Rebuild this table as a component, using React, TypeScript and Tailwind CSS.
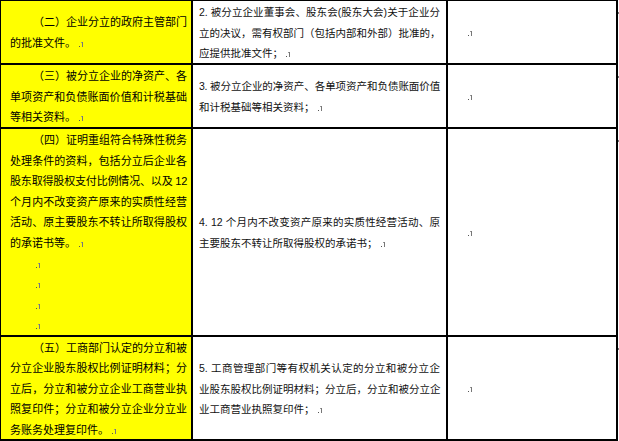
import type { ReactNode } from 'react';

type Line = { text: string; full?: boolean; indent?: boolean; mark?: boolean; tight?: boolean };

type Row = {
  height: string;
  left: Line[];
  right: Line[];
};

const rows: Row[] = [
  {
    height: 'h-[64px]',
    left: [
      { text: '（二）企业分立的政府主管部门', full: true, indent: true },
      { text: '的批准文件。', mark: true },
    ],
    right: [
      { text: '2. 被分立企业董事会、股东会(股东大会)关于企业分', full: true },
      { text: '立的决议，需有权部门（包括内部和外部）批准的，', full: true },
      { text: '应提供批准文件；', mark: true },
    ],
  },
  {
    height: 'h-[64px]',
    left: [
      { text: '（三）被分立企业的净资产、各', full: true, indent: true },
      { text: '单项资产和负债账面价值和计税基础', full: true },
      { text: '等相关资料。', mark: true },
    ],
    right: [
      { text: '3. 被分立企业的净资产、各单项资产和负债账面价值', full: true, tight: true },
      { text: '和计税基础等相关资料；', mark: true },
    ],
  },
  {
    height: 'h-[208px]',
    left: [
      { text: '（四）证明重组符合特殊性税务', full: true, indent: true },
      { text: '处理条件的资料，包括分立后企业各', full: true },
      { text: '股东取得股权支付比例情况、以及 12', full: true, tight: true },
      { text: '个月内不改变资产原来的实质性经营', full: true },
      { text: '活动、原主要股东不转让所取得股权', full: true },
      { text: '的承诺书等。', mark: true },
      { text: '', indent: true, mark: true },
      { text: '', indent: true, mark: true },
      { text: '', indent: true, mark: true },
      { text: '', indent: true, mark: true },
    ],
    right: [
      { text: '4. 12 个月内不改变资产原来的实质性经营活动、原', full: true },
      { text: '主要股东不转让所取得股权的承诺书；', mark: true },
    ],
  },
  {
    height: 'h-[104px]',
    left: [
      { text: '（五）工商部门认定的分立和被', full: true, indent: true },
      { text: '分立企业股东股权比例证明材料；分', full: true },
      { text: '立后，分立和被分立企业工商营业执', full: true },
      { text: '照复印件；分立和被分立企业分立业', full: true },
      { text: '务账务处理复印件。', mark: true },
    ],
    right: [
      { text: '5. 工商管理部门等有权机关认定的分立和被分立企', full: true },
      { text: '业股东股权比例证明材料；分立后，分立和被分立企', full: true },
      { text: '业工商营业执照复印件；', mark: true },
    ],
  },
];

function ParaMark() {
  return (
    <svg width="5" height="6" viewBox="0 0 5 6" className="ml-[3px] inline-block align-baseline">
      <rect x="0" y="5" width="1" height="1" fill="#555" />
      <rect x="3" y="1" width="1" height="5" fill="#777" />
      <rect x="2" y="1" width="1" height="1" fill="#999" />
    </svg>
  );
}

function TextLine({ line }: { line: Line }) {
  const content: ReactNode = (
    <>
      {line.text}
      {line.mark && <ParaMark />}
    </>
  );
  return (
    <div
      className={[
        'whitespace-nowrap',
        line.full ? 'text-justify [text-align-last:justify]' : '',
        line.indent ? 'indent-[23px]' : '',
        line.tight ? 'tracking-[-0.3px]' : '',
      ].join(' ')}
    >
      {content}
    </div>
  );
}

export default function App() {
  return (
    <div
      className="flex w-[619px] h-[441px] overflow-hidden bg-white text-black"
      style={{ fontFamily: '"Liberation Sans", "Noto Sans CJK SC", sans-serif' }}
    >
      <div className="flex flex-col w-[618px] border-l border-t border-black">
        {rows.map((row, i) => (
          <div key={i} className={`flex ${row.height} border-b-2 border-black`}>
            <div className="flex flex-col justify-center w-[192px] shrink-0 border-r-2 border-black bg-[#ffff00] pl-[9px] pr-[4px] pt-[2px] text-[11px] leading-[20.6px]">
              {row.left.map((l, j) => (
                <TextLine key={j} line={l} />
              ))}
            </div>
            <div className="flex flex-col justify-center w-[255px] shrink-0 border-r-2 border-black pl-[6px] pr-[6px] pt-[2px] text-[10.5px] leading-[20.6px] text-[#111]">
              {row.right.map((l, j) => (
                <TextLine key={j} line={l} />
              ))}
            </div>
            <div className="flex flex-1 items-center border-r-2 border-black pl-[17px] pt-[2px]">
              <ParaMark />
            </div>
          </div>
        ))}
      </div>
      <div className="flex flex-col w-px">
        {rows.map((row, i) => (
          <div key={i} className={`${row.height} pt-[12px]`}>
            <div className="h-[2px] w-px bg-[#777]" />
          </div>
        ))}
      </div>
    </div>
  );
}
